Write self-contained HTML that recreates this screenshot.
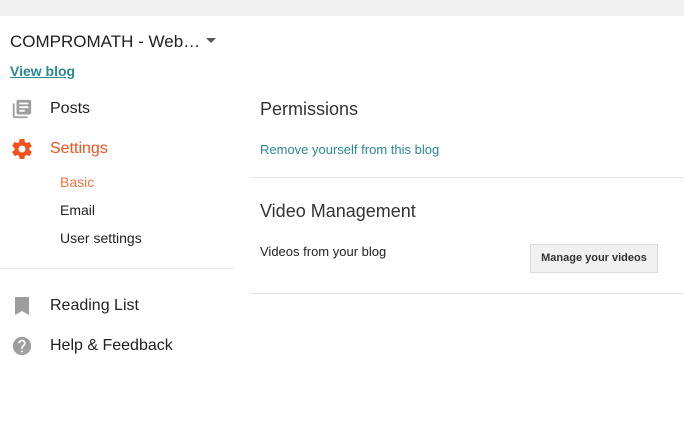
<!DOCTYPE html>
<html><head><style>
body{margin:0;width:684px;height:421px;background:#fff;position:relative;overflow:hidden;font-family:"Liberation Sans",Arial,sans-serif;}
.a{position:absolute;white-space:nowrap;}
.top{left:0;top:0;width:684px;height:16px;background:#f1f1f1;}
.nav{font-size:16px;color:#212121;}
.sub{font-size:14px;color:#212121;}
.hr{position:absolute;height:1px;background:#e5e5e5;}
</style></head><body>
<div class="a top"></div>
<div class="a" style="left:10px;top:32px;font-size:17px;color:#212121;">COMPROMATH - Web…</div>
<svg class="a" style="left:206px;top:38px" width="10" height="6"><path d="M0 0h10L5 5z" fill="#555"/></svg>
<div class="a" style="left:10px;top:63px;font-size:14px;font-weight:bold;color:#2a8a8f;text-decoration:underline;">View blog</div>

<svg class="a" style="left:11px;top:98px" width="22" height="22" viewBox="0 0 24 24"><path fill="#9e9e9e" d="M4 6H2v14c0 1.1.9 2 2 2h14v-2H4V6zm16-4H8c-1.1 0-2 .9-2 2v12c0 1.1.9 2 2 2h12c1.1 0 2-.9 2-2V4c0-1.1-.9-2-2-2zm-1 9H9V9h10v2zm-4 4H9v-2h6v2zm4-8H9V5h10v2z"/></svg>
<div class="a nav" style="left:50px;top:100px;">Posts</div>

<svg class="a" style="left:10px;top:137px" width="24" height="24" viewBox="0 0 24 24"><path fill="#f4511e" d="M19.43 12.98c.04-.32.07-.64.07-.98s-.03-.66-.07-.98l2.110-1.65c.19-.15.24-.42.12-.64l-2-3.46c-.12-.22-.39-.3-.61-.22l-2.490 1c-.52-.4-1.080-.73-1.690-.98l-.38-2.650C14.460 2.180 14.250 2 14 2h-4c-.25 0-.46.18-.49.42l-.38 2.65c-.61.25-1.170.59-1.690.98l-2.490-1c-.23-.09-.49 0-.61.22l-2 3.46c-.13.22-.07.49.12.64l2.110 1.65c-.04.32-.07.65-.07.98s.03.66.07.98l-2.110 1.65c-.19.15-.24.42-.12.64l2 3.46c.12.22.39.3.61.22l2.490-1c.52.4 1.080.73 1.690.98l.38 2.650c.03.24.24.42.49.42h4c.25 0 .46-.18.49-.42l.38-2.650c.61-.25 1.170-.59 1.690-.98l2.490 1c.23.09.49 0 .61-.22l2-3.460c.12-.22.07-.49-.12-.64l-2.110-1.650zM12 15.5c-1.93 0-3.5-1.57-3.5-3.5s1.57-3.5 3.5-3.5 3.5 1.57 3.5 3.5-1.57 3.5-3.5 3.5z"/></svg>
<div class="a nav" style="left:50px;top:140px;color:#f4511e;">Settings</div>

<div class="a sub" style="left:60px;top:174px;color:#f4703e;">Basic</div>
<div class="a sub" style="left:60px;top:202px;">Email</div>
<div class="a sub" style="left:60px;top:230px;">User settings</div>
<div class="hr" style="left:0;top:268px;width:234px;"></div>

<svg class="a" style="left:15px;top:297px" width="14" height="18" viewBox="0 0 14 18"><path fill="#9e9e9e" d="M0 0h14v18l-7-4-7 4z"/></svg>
<div class="a nav" style="left:50px;top:297px;">Reading List</div>
<svg class="a" style="left:11px;top:335px" width="22" height="22" viewBox="0 0 24 24"><path fill="#9e9e9e" d="M12 2C6.48 2 2 6.48 2 12s4.48 10 10 10 10-4.48 10-10S17.52 2 12 2zm1 17h-2v-2h2v2zm2.07-7.75l-.9.92C13.45 12.9 13 13.5 13 15h-2v-.5c0-1.1.45-2.1 1.17-2.83l1.24-1.26c.37-.36.59-.86.59-1.41 0-1.1-.9-2-2-2s-2 .9-2 2H8c0-2.21 1.79-4 4-4s4 1.790 4 4c0 .88-.36 1.68-.93 2.25z"/></svg>
<div class="a nav" style="left:50px;top:337px;">Help &amp; Feedback</div>

<div class="a" style="left:260px;top:99px;font-size:18px;color:#333;">Permissions</div>
<div class="a" style="left:260px;top:142px;font-size:13px;color:#2a8a8f;">Remove yourself from this blog</div>
<div class="hr" style="left:250px;top:177px;width:434px;"></div>
<div class="a" style="left:260px;top:201px;font-size:18px;color:#333;">Video Management</div>
<div class="a" style="left:260px;top:244px;font-size:13px;color:#222;">Videos from your blog</div>
<div class="a" style="left:530px;top:244px;width:126px;height:27px;background:#f1f1f1;border:1px solid #dcdcdc;font-size:11px;font-weight:bold;color:#333;text-align:center;line-height:27px;">Manage your videos</div>
<div class="hr" style="left:250px;top:293px;width:434px;"></div>
</body></html>
